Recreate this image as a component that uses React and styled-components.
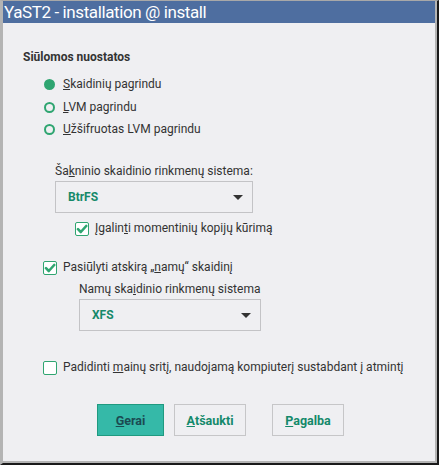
import styled, { createGlobalStyle } from "styled-components";

const GREEN = "#2fa571";

const GlobalStyle = createGlobalStyle`
  html, body {
    margin: 0;
    padding: 0;
    background: #ffffff;
  }
  body {
    font-family: Roboto, "Liberation Sans", sans-serif;
    color: #333333;
  }
`;

function Radio({ checked, label, mnemonic }) {
  return (
    <RadioRow>
      <RadioDot checked={checked} />
      <Label>
        <u>{mnemonic}</u>
        {label}
      </Label>
    </RadioRow>
  );
}

function CheckBox({ checked, children }) {
  return (
    <CheckRow>
      <Box>
        {checked && (
          <svg width="12" height="12" viewBox="0 0 12 12">
            <path
              d="M2 6.2 L4.8 9 L10.2 3"
              fill="none"
              stroke={GREEN}
              strokeWidth="2.6"
              strokeLinecap="round"
              strokeLinejoin="round"
            />
          </svg>
        )}
      </Box>
      <Label>{children}</Label>
    </CheckRow>
  );
}

function Select({ value, width }) {
  return (
    <SelectBox width={width}>
      <SelectValue>{value}</SelectValue>
      <Arrow />
    </SelectBox>
  );
}

export default function App() {
  return (
    <>
      <GlobalStyle />
      <Window>
        <TitleBar>YaST2 - installation @ install</TitleBar>
        <Content>
          <Heading>Siūlomos nuostatos</Heading>
          <RadioGroup>
            <Radio checked mnemonic="S" label="kaidinių pagrindu" />
            <Radio mnemonic="L" label="VM pagrindu" />
            <Radio mnemonic="U" label="žšifruotas LVM pagrindu" />
          </RadioGroup>

          <Indented left={32} top={26}>
            <FieldLabel>
              Ša<u>k</u>ninio skaidinio rinkmenų sistema:
            </FieldLabel>
            <Select value="BtrFS" width={198} />
            <Indented left={20} top={7}>
              <CheckBox checked>
                Įgalin<u>t</u>i momentinių kopijų kūrimą
              </CheckBox>
            </Indented>
          </Indented>

          <Indented left={20} top={22}>
            <CheckBox checked>
              Pasiūlyti atskirą „<u>n</u>amų“ skaidinį
            </CheckBox>
            <Indented left={36} top={6}>
              <FieldLabel>
                Namų ska<u>i</u>dinio rinkmenų sistema
              </FieldLabel>
              <Select value="XFS" width={182} />
            </Indented>
          </Indented>

          <Indented left={20} top={28}>
            <CheckBox>
              Padidinti <u>m</u>ainų sritį, naudojamą kompiuterį sustabdant į
              atmintį
            </CheckBox>
          </Indented>

          <Buttons>
            <Button primary width={67}>
              <u>G</u>erai
            </Button>
            <Button width={72}>
              <u>A</u>tšaukti
            </Button>
            <Button width={72} gapBefore={16}>
              <u>P</u>agalba
            </Button>
          </Buttons>
        </Content>
      </Window>
    </>
  );
}

const Window = styled.div`
  width: 439px;
  height: 465px;
  box-sizing: border-box;
  background: #efeff2;
  border-top: 1px solid #a8a8a8;
  border-left: 3px solid #b4b4b4;
  border-right: 2px solid #1a1a1a;
  border-bottom: 2px solid #1a1a1a;
  box-shadow: inset -2px -2px 0 #b4b4b4;
  display: flex;
  flex-direction: column;
`;

const TitleBar = styled.div`
  height: 22px;
  line-height: 22px;
  background: #4e6ea0;
  color: #ffffff;
  font-size: 17px;
  letter-spacing: -0.4px;
  padding-left: 1px;
  margin-right: 2px;
  white-space: nowrap;
`;

const Content = styled.div`
  padding: 27px 0 0 20px;
  display: flex;
  flex-direction: column;
`;

const Heading = styled.div`
  font-size: 12px;
  font-weight: 700;
  color: #333333;
  line-height: 14px;
`;

const RadioGroup = styled.div`
  display: flex;
  flex-direction: column;
  gap: 5.5px;
  padding: 12px 0 0 21px;
`;

const RadioRow = styled.div`
  display: flex;
  align-items: center;
  gap: 8px;
  height: 17px;
`;

const RadioDot = styled.span`
  width: 11px;
  height: 11px;
  box-sizing: border-box;
  border-radius: 50%;
  border: 2px solid ${GREEN};
  background: ${(p) => (p.checked ? GREEN : "transparent")};
`;

const Label = styled.span`
  font-size: 12px;
  color: #333333;
  line-height: 17px;
  white-space: nowrap;
`;

const Indented = styled.div`
  display: flex;
  flex-direction: column;
  margin-left: ${(p) => p.left}px;
  margin-top: ${(p) => p.top}px;
`;

const FieldLabel = styled.div`
  font-size: 12px;
  line-height: 15px;
  color: #333333;
  margin-bottom: 2px;
`;

const SelectBox = styled.div`
  width: ${(p) => p.width}px;
  height: 32px;
  box-sizing: border-box;
  border: 1px solid #c3c3c6;
  display: flex;
  align-items: center;
  justify-content: space-between;
  padding: 0 9px 0 12px;
`;

const SelectValue = styled.span`
  font-size: 12px;
  font-weight: 700;
  color: #16896a;
`;

const Arrow = styled.span`
  width: 0;
  height: 0;
  border-left: 5px solid transparent;
  border-right: 5px solid transparent;
  border-top: 5px solid #333333;
`;

const CheckRow = styled.div`
  display: flex;
  align-items: center;
  gap: 6px;
  height: 17px;
`;

const Box = styled.span`
  width: 14px;
  height: 14px;
  box-sizing: border-box;
  border: 1px solid ${GREEN};
  border-radius: 2px;
  background: #ffffff;
  display: flex;
  align-items: center;
  justify-content: center;
`;

const Buttons = styled.div`
  display: flex;
  gap: 10px;
  margin: 28px 0 0 74px;
`;

const Button = styled.div`
  width: ${(p) => p.width}px;
  margin-left: ${(p) => p.gapBefore || 0}px;
  height: 32px;
  box-sizing: border-box;
  display: flex;
  align-items: center;
  justify-content: center;
  font-size: 12.5px;
  font-weight: 700;
  border: 1px solid ${(p) => (p.primary ? "#1f9a80" : "#c6c6c8")};
  background: ${(p) => (p.primary ? "#35b9a8" : "transparent")};
  color: ${(p) => (p.primary ? "#1b4a52" : "#14896a")};
`;
